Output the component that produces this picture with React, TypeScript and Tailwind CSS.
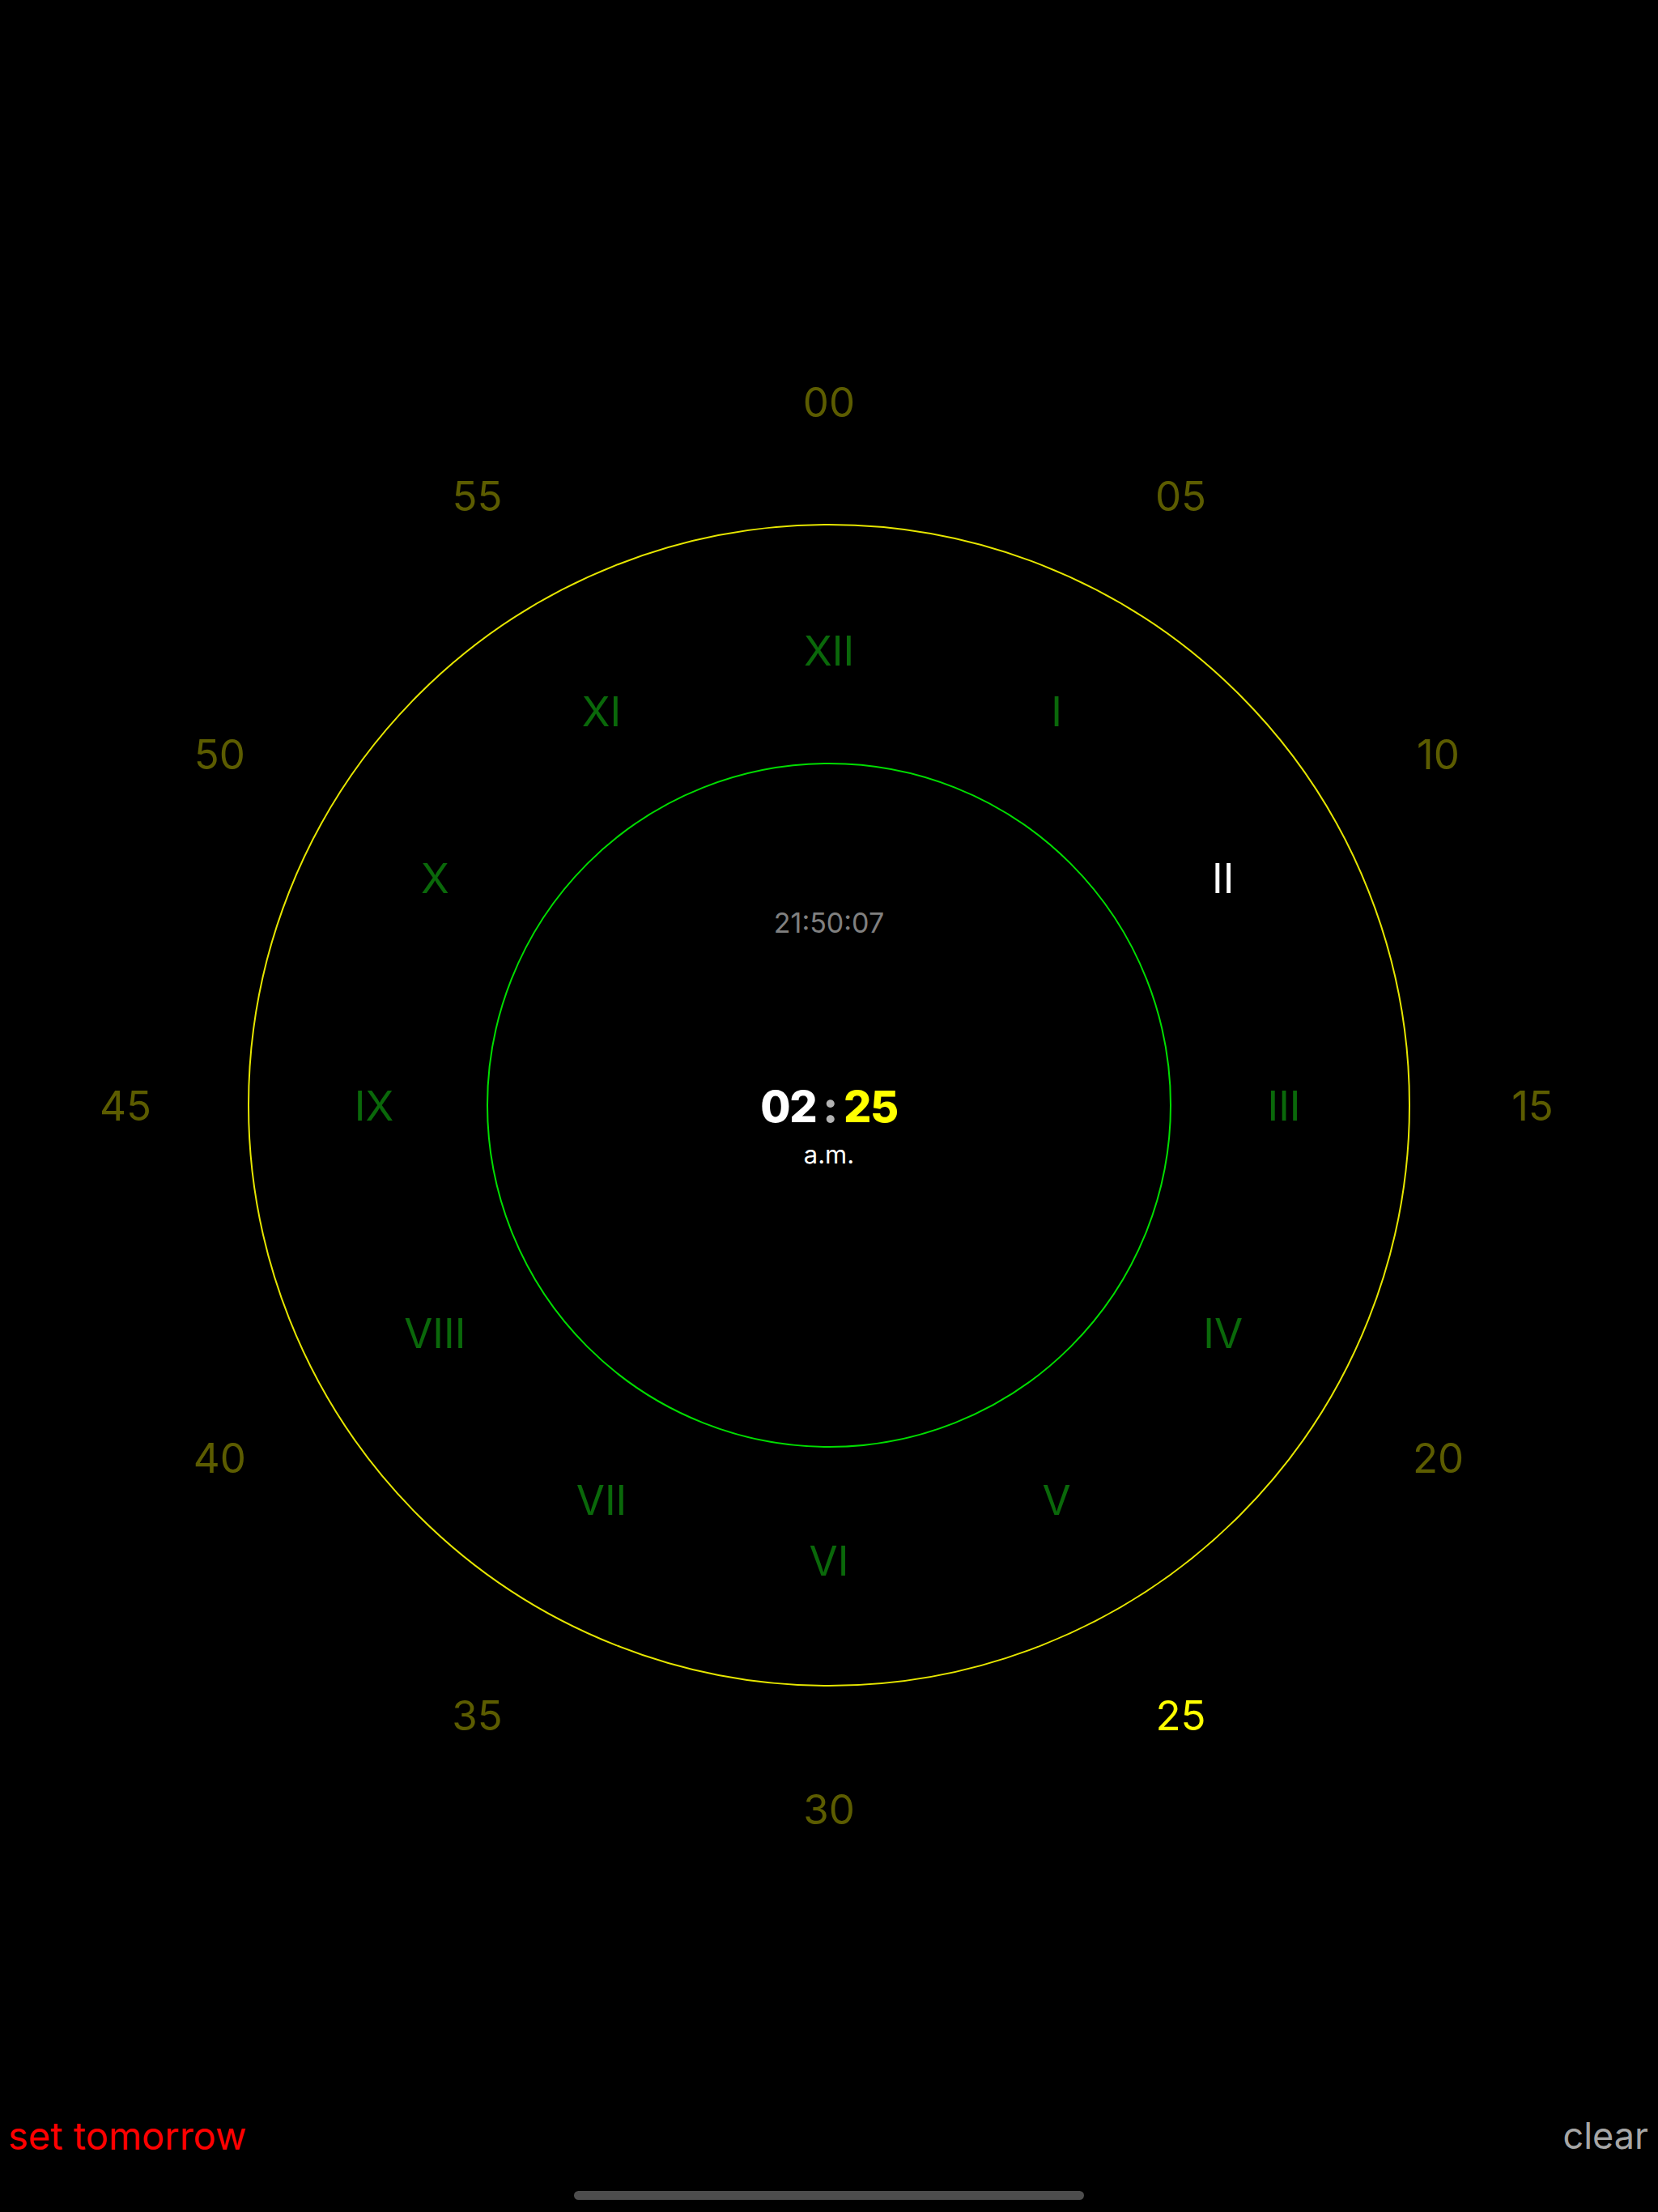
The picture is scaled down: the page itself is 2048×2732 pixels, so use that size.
import type { CSSProperties } from 'react'

const SIZE = 1800
const C = SIZE / 2
const MINUTE_R = 869
const HOUR_R = 562

const MINUTES = ['00', '05', '10', '15', '20', '25', '30', '35', '40', '45', '50', '55']
const HOURS = ['XII', 'I', 'II', 'III', 'IV', 'V', 'VI', 'VII', 'VIII', 'IX', 'X', 'XI']

const alarm = { hour: 2, minute: 25 }

function polar(index: number, r: number): CSSProperties {
  const a = (index * 30 * Math.PI) / 180
  return { left: C + r * Math.sin(a), top: C - r * Math.cos(a) }
}

function Rings() {
  return (
    <svg className="absolute inset-0" width={SIZE} height={SIZE} viewBox={`0 0 ${SIZE} ${SIZE}`}>
      <circle cx={C} cy={C} r={717} fill="none" stroke="#e6e600" strokeWidth={2} />
      <circle cx={C} cy={C} r={422} fill="none" stroke="#00dd00" strokeWidth={2} />
    </svg>
  )
}

function Dial() {
  return (
    <div className="relative mx-auto h-[1800px] w-[1800px] shrink-0">
      <Rings />

      {MINUTES.map((m, i) => (
        <span
          key={m}
          style={polar(i, MINUTE_R)}
          className={
            i * 5 === alarm.minute
              ? 'absolute -translate-x-1/2 -translate-y-1/2 text-[51px] leading-none text-[#ffff00]'
              : 'absolute -translate-x-1/2 -translate-y-1/2 text-[51px] leading-none text-[#5c5c00]'
          }
        >
          {m}
        </span>
      ))}

      {HOURS.map((h, i) => (
        <span
          key={h}
          style={polar(i, HOUR_R)}
          className={
            i === alarm.hour
              ? 'absolute -translate-x-1/2 -translate-y-1/2 text-[51px] leading-none text-white'
              : 'absolute -translate-x-1/2 -translate-y-1/2 text-[51px] leading-none text-[#0a680a]'
          }
        >
          {h}
        </span>
      ))}

      {/* current time */}
      <span className="absolute left-[900px] top-[675px] -translate-x-1/2 -translate-y-1/2 text-[34px] leading-none text-[#808080]">
        21:50:07
      </span>

      {/* alarm time */}
      <div className="absolute left-[900px] top-[902px] flex -translate-x-1/2 -translate-y-1/2 items-center gap-[8px] text-[54px] font-extrabold leading-none tracking-tight">
        <span className="text-white">02</span>
        <span className="text-[#b3b3b3]">:</span>
        <span className="text-[#ffff00]">25</span>
      </div>
      <span className="absolute left-[900px] top-[960px] -translate-x-1/2 -translate-y-1/2 text-[31px] leading-none text-white">
        a.m.
      </span>
    </div>
  )
}

export default function App() {
  return (
    <div
      className="flex h-[2732px] w-full flex-col overflow-hidden bg-black"
      style={{ fontFamily: 'Inter, "Liberation Sans", sans-serif' }}
    >
      <div className="mt-[465px]">
        <Dial />
      </div>
      <div className="flex-1" />
      <div className="flex h-[58px] items-center justify-between pl-[10px] pr-[12px] leading-[58px]">
        <button type="button" className="cursor-pointer text-[47px] text-[#ff0000]">
          set tomorrow
        </button>
        <button type="button" className="cursor-pointer text-[45px] text-[#a6a6a6]">
          clear
        </button>
      </div>
      <div className="mx-auto mb-[15px] mt-[39px] h-[11px] w-[630px] rounded-full bg-[#4d4d4d]" />
    </div>
  )
}
